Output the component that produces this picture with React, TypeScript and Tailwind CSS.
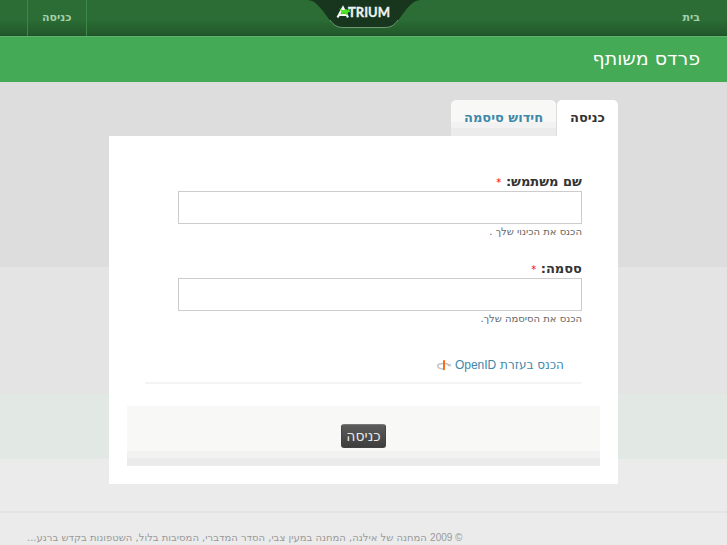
import type { ReactNode } from 'react';

interface FieldProps {
    id: string;
    label: string;
    type: string;
    description: string;
}

function AtriumLogo() {
    return (
        <svg width="112" height="29" viewBox="0 0 112 29" role="img" aria-label="Atrium" direction="ltr">
            <path
                d="M0 0C7 1 10 5 15 11C22 20 25 27.500 36 27.500H76C87 27.500 90 20 97 11C102 5 105 1 112 0Z"
                fill="#18351e"
            />
            <path d="M22 20C26 25.500 29 27.500 36 27.500H76C83 27.500 86 25.500 90 20" fill="none" stroke="#6f9a76" />
            <path d="M29.500 17.500L35 7.500L40 17.500M31 15H39" fill="none" stroke="#f4f8f4" strokeWidth="2.200" />
            <path
                d="M31 8L35 10.500L38 9L39.500 10L42.500 7L41.500 10.500L42 12L40 12.500L39 15L36.500 13.500L33 14.500L33.500 11.500Z"
                fill="#4fe321"
            />
            <text x="40" y="17" fill="#eef3ee" stroke="#eef3ee" strokeWidth="0.300" fontSize="13" fontWeight="700" fontFamily="Lato, sans-serif">
                TRIUM
            </text>
        </svg>
    );
}

function OpenIdIcon() {
    return (
        <svg width="14" height="12" viewBox="0 0 14 12" aria-hidden="true">
            <path d="M6 10C-1 9.500 -1 4.500 6 4.500M8 4.500C10 4.500 11 5 13 6.500" fill="none" stroke="#c4c4c4" strokeWidth="1.500" />
            <path d="M10 7L14 7.500L13.500 4.500Z" fill="#c4c4c4" />
            <path d="M6 1.500L8 1V10.500L6 11.500Z" fill="#ff6a13" />
        </svg>
    );
}

function Field({ id, label, type, description }: FieldProps) {
    return (
        <div className="mr-9 ml-[69px]">
            <label htmlFor={id} className="block text-[13px] leading-[19px] font-bold text-[#333]">
                {label}: <span className="text-[10px] leading-none font-normal text-[#f00]">*</span>
            </label>
            <input
                id={id}
                name={id}
                type={type}
                required
                className="block h-[33px] w-full border border-[#ccc] bg-white px-2 text-sm outline-none focus:border-[#888]"
            />
            <p className="text-[10px] leading-4 text-[#666]">{description}</p>
        </div>
    );
}

function Tab({ active = false, children }: { active?: boolean; children: ReactNode }) {
    const look = active
        ? 'bg-white text-[#333]'
        : 'bg-[linear-gradient(#f8f8f6_0_22px,#f2f2f2_22px_28px,#ebebeb_28px)] text-[#4088aa]';

    return (
        <a
            href="#"
            aria-current={active ? 'page' : undefined}
            className={`block h-9 rounded-t-[5px] px-[13px] text-[13px] leading-9 font-bold ${look}`}
        >
            {children}
        </a>
    );
}

export default function App() {
    return (
        <div
            dir="rtl"
            className="flex min-h-screen flex-col bg-[#ebebeb] bg-[linear-gradient(#ddd_0_267px,#e4e4e4_267px_394px,#e2e8e3_394px_459px,#ebebeb_459px)] font-['DejaVu_Sans',sans-serif]"
        >
            <header className="relative flex h-[37px] items-stretch justify-between border-b border-[#60b56c] bg-[linear-gradient(#2b6d35_0_20px,#28632f_26px,#245a2d_34px,#1e4d26)] px-[27px] text-[11px] font-bold text-[#a4cfaa]">
                <a href="#" className="flex items-center">
                    בית
                </a>
                <div className="absolute top-0 left-1/2 -translate-x-1/2">
                    <AtriumLogo />
                </div>
                <a href="#" className="flex items-center border-x border-[#3c8849] px-[14px]">
                    כניסה
                </a>
            </header>

            <div className="flex h-[45px] items-center bg-[#45aa55] px-[27px] pb-1">
                <h1 className="text-[19px] leading-6 text-white">פרדס משותף</h1>
            </div>

            <main className="mx-auto mt-[18px] w-[70%]">
                <nav className="flex gap-px">
                    <Tab active>כניסה</Tab>
                    <Tab>חידוש סיסמה</Tab>
                </nav>

                <form className="bg-white pt-9 pb-[18px]" onSubmit={(e) => e.preventDefault()}>
                    <div className="flex flex-col gap-[19px]">
                        <Field id="name" label="שם משתמש" type="text" description="הכנס את הכינוי שלך ." />
                        <Field id="pass" label="ססמה" type="password" description="הכנס את הסיסמה שלך." />
                    </div>

                    <div className="mx-9 mt-7 flex border-b-2 border-[#f4f4f4] pr-[18px] pb-[7px]">
                        <a href="#" className="flex items-center gap-1 text-[12px] leading-5 text-[#4088aa]">
                            <span>
                                הכנס בעזרת <span className="font-['Liberation_Sans',sans-serif]">OpenID</span>
                            </span>
                            <OpenIdIcon />
                        </a>
                    </div>

                    <div className="mx-[18px] mt-[22px] flex h-[60px] items-center justify-center bg-[linear-gradient(#f8f8f6_0_45px,#f2f2f2_45px_52px,#ebebeb_52px)]">
                        <button
                            type="submit"
                            className="h-6 rounded-[3px] border border-[#444] border-t-[#777] bg-linear-to-b from-[#5c5c5c] to-[#3e3e3e] px-1 text-[14px] leading-5 text-[#e8e8e8]"
                        >
                            כניסה
                        </button>
                    </div>
                </form>
            </main>

            <footer className="mt-[27px] border-t-2 border-[#e2e5e3] px-[27px] pt-[18px] text-left text-[10px] leading-[14px] text-[#999]">
                <span className="font-['Liberation_Sans',sans-serif]">© 2009</span> המחנה של אילנה, המחנה במעין צבי,
                הסדר המדברי, המסיבות בלול, השטפונות בקדש ברנע...
            </footer>
        </div>
    );
}
